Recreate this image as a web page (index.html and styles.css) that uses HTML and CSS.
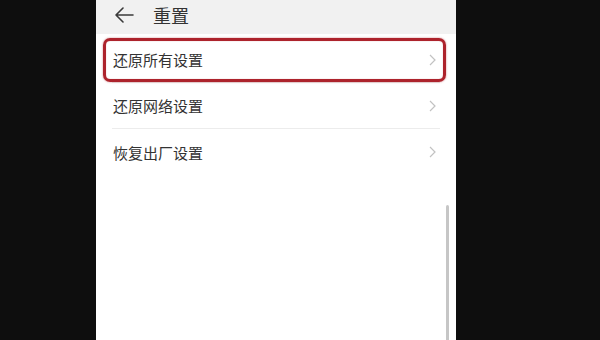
FILE: index.html
```html
<!DOCTYPE html>
<html lang="zh-CN">
<head>
<meta charset="utf-8">
<link rel="stylesheet" href="styles.css">
</head>
<body>
<div class="screen">
  <header class="topbar">
    <svg class="back" width="20" height="16" viewBox="0 0 20 16"><path d="M2 8H19M9 1L2 8L9 15" fill="none" stroke="#3a3a3a" stroke-width="1.6" stroke-linecap="round" stroke-linejoin="round"/></svg>
    <span class="title">重置</span>
  </header>
  <ul class="list">
    <li class="row"><span class="label">还原所有设置</span><svg class="chev" width="7" height="12" viewBox="0 0 7 12"><path d="M1 1L6 6L1 11" fill="none" stroke="#c2c2c2" stroke-width="1.2"/></svg></li>
    <li class="row"><span class="label">还原网络设置</span><svg class="chev" width="7" height="12" viewBox="0 0 7 12"><path d="M1 1L6 6L1 11" fill="none" stroke="#c2c2c2" stroke-width="1.2"/></svg></li>
    <li class="row last"><span class="label">恢复出厂设置</span><svg class="chev" width="7" height="12" viewBox="0 0 7 12"><path d="M1 1L6 6L1 11" fill="none" stroke="#c2c2c2" stroke-width="1.2"/></svg></li>
  </ul>
  <div class="highlight"></div>
  <div class="scrollbar"></div>
</div>
</body>
</html>
```
FILE: styles.css
```css
html, body {
  margin: 0;
  padding: 0;
}
body {
  width: 600px;
  height: 340px;
  background: #0e0e0e;
  display: flex;
  padding-left: 96px;
  box-sizing: border-box;
  overflow: hidden;
  font-family: "Noto Sans CJK SC", "Noto Sans", sans-serif;
}
.screen {
  position: relative;
  width: 360px;
  height: 340px;
  background: #ffffff;
  display: flex;
  flex-direction: column;
}
.topbar {
  height: 30px;
  padding: 0 0 4px 18px;
  background: #f1f1f1;
  display: flex;
  align-items: center;
  gap: 19px;
}
.back {
  display: block;
}
.title {
  font-size: 18px;
  color: #333333;
  line-height: 1;
}
.list {
  list-style: none;
  margin: 0;
  padding: 3px 16px 0 16px;
}
.row {
  height: 46px;
  box-sizing: border-box;
  display: flex;
  align-items: center;
  justify-content: space-between;
  padding: 0 4px 0 1px;
  border-bottom: 1px solid #ececec;
}
.row.last {
  border-bottom: none;
}
.label {
  font-size: 15px;
  color: #333333;
  line-height: 1;
}
.chev {
  display: block;
}
.highlight {
  position: absolute;
  left: 7px;
  top: 38px;
  width: 343px;
  height: 44px;
  box-sizing: border-box;
  border: 3px solid #ad232c;
  border-radius: 7px;
  box-shadow: 0 0 2px rgba(173, 35, 44, 0.6), inset 0 0 1px rgba(173, 35, 44, 0.5);
}
.scrollbar {
  position: absolute;
  left: 350px;
  top: 205px;
  width: 3px;
  height: 140px;
  border-radius: 2px;
  background: #c6c6c6;
}
```
